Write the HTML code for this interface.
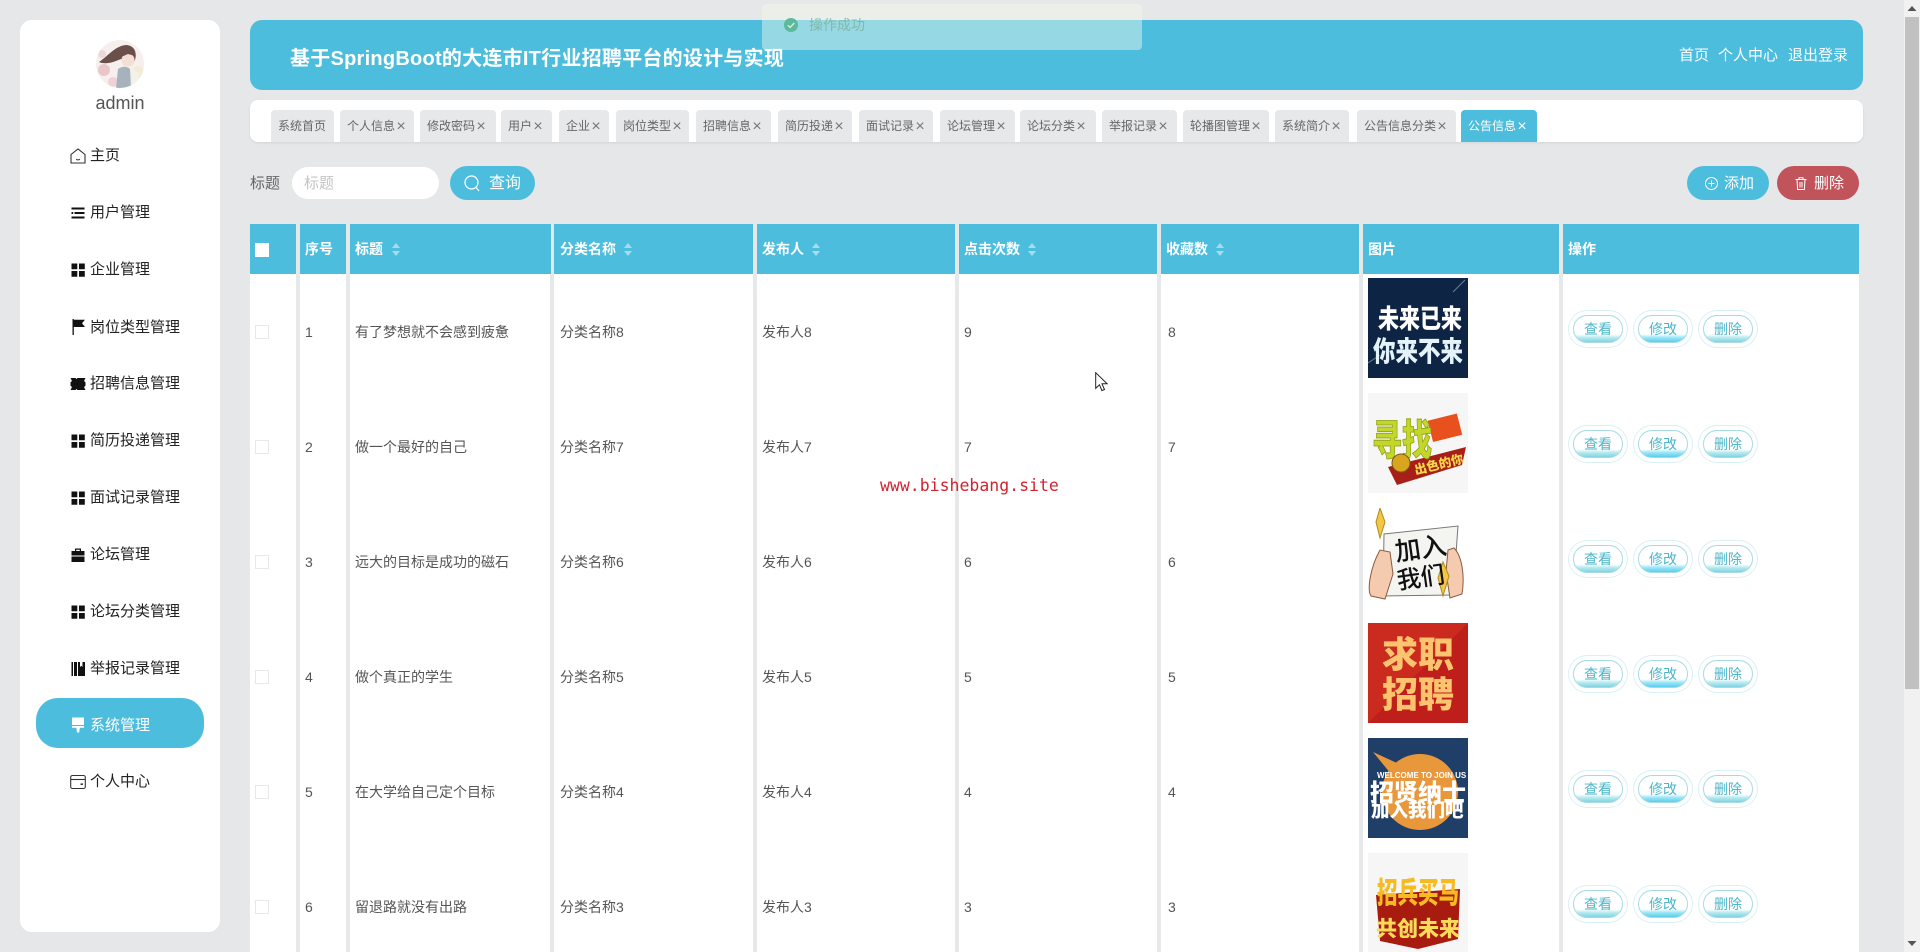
<!DOCTYPE html>
<html lang="zh-CN">
<head>
<meta charset="utf-8">
<title>基于SpringBoot的大连市IT行业招聘平台的设计与实现</title>
<style>
*{box-sizing:border-box;margin:0;padding:0}
html,body{width:1920px;height:952px;overflow:hidden}
body{position:relative;background:#e5e7e8;font-family:"Liberation Sans","Noto Sans CJK SC",sans-serif;color:#555}
.a{position:absolute}
.side{left:20px;top:20px;width:200px;height:912px;background:#fff;border-radius:12px}
.admin{left:20px;width:200px;top:91px;text-align:center;font-size:18px;line-height:24px;color:#555}
.m{left:90px;font-size:15px;line-height:24px;color:#222;white-space:nowrap;margin-top:1px}
.ic{left:70px;width:16px;height:16px;margin-top:1px}
.pill{left:36px;top:698px;width:168px;height:50px;border-radius:22px;background:#4dbddd}
.banner{left:250px;top:20px;width:1613px;height:70px;background:#4dbddd;border-radius:12px}
.title{left:290px;top:43px;font-size:20px;line-height:32px;font-weight:700;color:#fff;white-space:nowrap;letter-spacing:.25px}
.nav{top:44px;font-size:15px;line-height:24px;color:#fff;white-space:nowrap}
.tabs{left:250px;top:100px;width:1613px;height:42px;background:#fff;border-radius:8px;box-shadow:0 1px 2px rgba(0,0,0,.08)}
.t{top:110px;height:32px;background:#e6e8ea;border-radius:4px 4px 0 0;font-size:12px;line-height:33px;color:#666;padding-left:7px;white-space:nowrap}
.t b{display:inline-block;width:12px;text-align:center;font-weight:400;color:#777;font-size:16px;line-height:0;vertical-align:-1px}
.on{background:#4dbddd;color:#fff}.on b{color:#fff}
.lab{left:250px;top:172px;font-size:15px;line-height:24px;color:#666}
.inp{left:292px;top:167px;width:147px;height:32px;border-radius:16px;background:#fff;padding-left:12px;font-size:15px;line-height:33px;color:#c4c4c4}
.bt{top:166px;height:34px;border-radius:17px;color:#fff;font-size:15px;line-height:36px;white-space:nowrap}
.bt span{position:absolute;top:0}
.th{top:224px;height:50px;background:#4dbddd}
.tt{top:237px;font-size:14px;line-height:24px;font-weight:700;color:#fff;white-space:nowrap}
.so{top:243px;width:8px;height:13px}
.body{left:250px;top:274px;width:1609px;height:678px;background:#fff}
.v{top:274px;width:4px;height:678px;background:#e7e8ea}
.r{left:0;width:1920px;height:115px;font-size:14px;color:#555}
.r span{position:absolute;top:0;line-height:116px;white-space:nowrap}
.r i{position:absolute;left:255px;top:51px;width:14px;height:14px;border:1px solid #e8e8e8;background:#fff}
.r .b{position:absolute;top:41px;width:50px;height:28px;line-height:26px;text-align:center;border:1px solid #a6dbe4;border-radius:14px;font-size:14px;color:#4cb6ca;background:linear-gradient(#fff 0,#fff 70%,#b4e8ee 84%,#7fd4e2 100%);box-shadow:0 0 0 4px #fff,0 0 0 5px #d8f1f6}
.r .b2{background:linear-gradient(#fff 0,#fff 70%,#9fe8f6 82%,#58cdee 100%)}
.r svg{position:absolute;left:1368px;top:4px;width:100px;height:100px}
.toast{left:762px;top:4px;width:380px;height:46px;background:rgba(240,249,235,.45);border-radius:4px}
.tx{left:809px;top:15px;font-size:14px;line-height:20px;color:#80b9aa}
.wm{left:880px;top:475px;font-family:"DejaVu Sans Mono","Liberation Mono",monospace;font-size:16.5px;line-height:22px;color:#d3232e;white-space:nowrap}
text{font-family:"Liberation Sans","Noto Sans CJK SC",sans-serif;font-weight:900}
</style>
</head>
<body>
<div class="a side"></div>
<svg class="a" style="left:96px;top:40px" width="48" height="48" viewBox="0 0 48 48"><defs><clipPath id="cp"><circle cx="24" cy="24" r="24"/></clipPath></defs><g clip-path="url(#cp)"><rect width="48" height="48" fill="#f5efee"/><circle cx="8" cy="30" r="6" fill="#eac6ca"/><circle cx="17" cy="42" r="5" fill="#f0d2d6"/><circle cx="6" cy="14" r="4" fill="#eed6da"/><circle cx="42" cy="32" r="6" fill="#f3ead8"/><path d="M3 22C12 16 20 5 31 5c8 1 10 8 8 15l-3 5-11-6C18 22 10 25 3 22z" fill="#6b4f4a"/><circle cx="32" cy="20" r="6.500" fill="#f3dfd4"/><path d="M26 8c5-2 12 1 13 8l-7-2-7 3z" fill="#6b4f4a"/><path d="M20 48l2-19c4-3 9-3 12 0l3 19z" fill="#a7b3bc"/><path d="M34 27l9 6-2 15h-6z" fill="#f4f1e8"/></g></svg>
<div class="a admin">admin</div>

<div class="a pill"></div>
<svg class="a ic" style="top:147px" viewBox="0 0 16 16" fill="none" stroke="#333" stroke-width="1.1"><path d="M1 6.5 8 .9l7 5.6V15H1zM6.2 11.2c1 .9 2.6.9 3.6 0"/></svg>
<div class="a m" style="top:143px">主页</div>
<svg class="a ic" style="top:204px" viewBox="0 0 16 16" fill="#111"><path d="M1.5 2.5h13v2h-13zM1.5 7h1.7v2H1.500zM4.500 7h10v2h-10zM1.500 11.500h13v2h-13z"/></svg>
<div class="a m" style="top:200px">用户管理</div>
<svg class="a ic" style="top:261px" viewBox="0 0 16 16" fill="#111"><path d="M1.500 1.500h5.800v5.800H1.500zM9 1.500h5.800v5.800H9zM1.500 9h5.800v5.800H1.500zM9 9h5.800v5.800H9z"/></svg>
<div class="a m" style="top:257px">企业管理</div>
<svg class="a ic" style="top:318px" viewBox="0 0 16 16" fill="#111"><path d="M2.500 0h1.300v16H2.500zM3.800 .8H15l-3 3.500 3 3.700H3.800z"/></svg>
<div class="a m" style="top:315px">岗位类型管理</div>
<svg class="a ic" style="top:375px" viewBox="0 0 16 16" fill="#111"><path d="M.5 2h5.200l.8 1.300L7.300 2h8.200l-1.500 3 1.500 1.200v3.600L14 11l1.500 3H7.300l-.8-1.300-.8 1.300H.5L2 11 .5 9.800V6.200L2 5z"/></svg>
<div class="a m" style="top:371px">招聘信息管理</div>
<svg class="a ic" style="top:432px" viewBox="0 0 16 16" fill="#111"><path d="M1.500 1.500h5.800v5.800H1.500zM9 1.500h5.800v5.800H9zM1.500 9h5.800v5.800H1.500zM9 9h5.800v5.800H9z"/></svg>
<div class="a m" style="top:428px">简历投递管理</div>
<svg class="a ic" style="top:489px" viewBox="0 0 16 16" fill="#111"><path d="M1.500 1.500h5.800v5.800H1.500zM9 1.500h5.800v5.800H9zM1.500 9h5.800v5.800H1.500zM9 9h5.800v5.800H9z"/></svg>
<div class="a m" style="top:485px">面试记录管理</div>
<svg class="a ic" style="top:546px" viewBox="0 0 16 16" fill="#111"><path d="M5 4V1.500h6V4h-1.200V2.700H6.200V4zM1.500 4h13v4.500h-13zM1.500 9.500h13V15h-13z"/></svg>
<div class="a m" style="top:542px">论坛管理</div>
<svg class="a ic" style="top:603px" viewBox="0 0 16 16" fill="#111"><path d="M1.500 1.500h5.800v5.800H1.500zM9 1.500h5.800v5.800H9zM1.500 9h5.800v5.800H1.500zM9 9h5.800v5.800H9z"/></svg>
<div class="a m" style="top:599px">论坛分类管理</div>
<svg class="a ic" style="top:660px" viewBox="0 0 16 16" fill="#111"><path d="M1.500 1h1.500v14H1.500zM4 1h3v14H4zM8 1h2v5l1.300-1.200L12.500 6V1H15v14H8z"/></svg>
<div class="a m" style="top:656px">举报记录管理</div>
<svg class="a ic" style="top:716px" viewBox="0 0 16 16" fill="#fff"><path d="M2 .5h12V8H2zM2 9h12v1.800H9.800L9.200 15.500H7l-.6-4.700H2z"/></svg>
<div class="a m" style="top:713px;color:#fff">系统管理</div>
<svg class="a ic" style="top:773px" viewBox="0 0 16 16" fill="none" stroke="#333" stroke-width="1.100"><rect x=".7" y="1.500" width="14.600" height="13" rx="1.800"/><path d="M.7 5.500h14.600"/><path d="M10.500 10.200h2.500" stroke-width="1.500"/></svg>
<div class="a m" style="top:769px">个人中心</div>

<div class="a banner"></div>
<div class="a title">基于SpringBoot的大连市IT行业招聘平台的设计与实现</div>
<div class="a nav" style="left:1679px">首页</div>
<div class="a nav" style="left:1718px">个人中心</div>
<div class="a nav" style="left:1788px">退出登录</div>

<div class="a tabs"></div>
<div class="a t" style="left:271px;width:63px">系统首页</div>
<div class="a t" style="left:340px;width:74px">个人信息<b>×</b></div>
<div class="a t" style="left:420px;width:76px">修改密码<b>×</b></div>
<div class="a t" style="left:501px;width:51px">用户<b>×</b></div>
<div class="a t" style="left:559px;width:50px">企业<b>×</b></div>
<div class="a t" style="left:616px;width:73px">岗位类型<b>×</b></div>
<div class="a t" style="left:696px;width:75px">招聘信息<b>×</b></div>
<div class="a t" style="left:778px;width:74px">简历投递<b>×</b></div>
<div class="a t" style="left:859px;width:74px">面试记录<b>×</b></div>
<div class="a t" style="left:940px;width:75px">论坛管理<b>×</b></div>
<div class="a t" style="left:1020px;width:76px">论坛分类<b>×</b></div>
<div class="a t" style="left:1102px;width:75px">举报记录<b>×</b></div>
<div class="a t" style="left:1183px;width:86px">轮播图管理<b>×</b></div>
<div class="a t" style="left:1275px;width:74px">系统简介<b>×</b></div>
<div class="a t" style="left:1357px;width:99px">公告信息分类<b>×</b></div>
<div class="a t on" style="left:1461px;width:76px">公告信息<b>×</b></div>

<div class="a lab">标题</div>
<div class="a inp">标题</div>
<div class="a bt" style="left:450px;width:85px;background:#4dbddd;font-size:16px"><svg class="a" style="left:14px;top:9px" width="16" height="17" viewBox="0 0 16 17" fill="none" stroke="#fff" stroke-width="1.200"><circle cx="7.500" cy="7.500" r="6.500"/><path d="M12 12.500l3 3.500"/></svg><span style="left:39px">查询</span></div>
<div class="a bt" style="left:1687px;width:82px;background:#4dbddd"><svg class="a" style="left:18px;top:11px" width="13" height="13" viewBox="0 0 13 13" fill="none" stroke="#fff" stroke-width="1"><circle cx="6.500" cy="6.500" r="6"/><path d="M6.500 3.500v6M3.500 6.500h6"/></svg><span style="left:37px">添加</span></div>
<div class="a bt" style="left:1777px;width:82px;background:#c1535b"><svg class="a" style="left:18px;top:11px" width="12" height="13" viewBox="0 0 12 13" fill="none" stroke="#fff" stroke-width="1"><path d="M.5 2.500h11M4 2.500V.8h4v1.700M2 2.500l.6 10h6.800l.6-10M5 5v5.500M7 5v5.500"/></svg><span style="left:37px">删除</span></div>

<div class="a th" style="left:250px;width:46px"></div>
<div class="a th" style="left:300px;width:46px"></div>
<div class="a th" style="left:350px;width:201px"></div>
<div class="a th" style="left:554px;width:199px"></div>
<div class="a th" style="left:757px;width:198px"></div>
<div class="a th" style="left:959px;width:198px"></div>
<div class="a th" style="left:1161px;width:198px"></div>
<div class="a th" style="left:1363px;width:196px"></div>
<div class="a th" style="left:1563px;width:296px"></div>
<div class="a" style="left:255px;top:243px;width:14px;height:14px;background:#fff"></div>
<div class="a tt" style="left:305px">序号</div>
<div class="a tt" style="left:355px">标题</div>
<svg class="a so" style="left:392px" viewBox="0 0 8 13" fill="#a6dcec"><path d="M4 0l4 5H0zM4 13L0 8h8z"/></svg>
<div class="a tt" style="left:560px">分类名称</div>
<svg class="a so" style="left:624px" viewBox="0 0 8 13" fill="#a6dcec"><path d="M4 0l4 5H0zM4 13L0 8h8z"/></svg>
<div class="a tt" style="left:762px">发布人</div>
<svg class="a so" style="left:812px" viewBox="0 0 8 13" fill="#a6dcec"><path d="M4 0l4 5H0zM4 13L0 8h8z"/></svg>
<div class="a tt" style="left:964px">点击次数</div>
<svg class="a so" style="left:1028px" viewBox="0 0 8 13" fill="#a6dcec"><path d="M4 0l4 5H0zM4 13L0 8h8z"/></svg>
<div class="a tt" style="left:1166px">收藏数</div>
<svg class="a so" style="left:1216px" viewBox="0 0 8 13" fill="#a6dcec"><path d="M4 0l4 5H0zM4 13L0 8h8z"/></svg>
<div class="a tt" style="left:1368px">图片</div>
<div class="a tt" style="left:1568px">操作</div>

<div class="a body"></div>
<div class="a v" style="left:296px"></div>
<div class="a v" style="left:346px"></div>
<div class="a v" style="left:550px"></div>
<div class="a v" style="left:753px"></div>
<div class="a v" style="left:955px"></div>
<div class="a v" style="left:1157px"></div>
<div class="a v" style="left:1359px"></div>
<div class="a v" style="left:1559px"></div>

<div class="a r" style="top:274px"><i></i><span style="left:305px">1</span><span style="left:355px">有了梦想就不会感到疲惫</span><span style="left:560px">分类名称8</span><span style="left:762px">发布人8</span><span style="left:964px">9</span><span style="left:1168px">8</span>
<svg viewBox="0 0 100 100"><rect width="100" height="100" fill="#0d2444"/><path d="M85 14l12-12M0 85l12-8" stroke="#6c7f96"/><text transform="translate(10 50) scale(1 1.250)" font-size="21" fill="#fff">未来已来</text><text transform="translate(5 83) scale(1 1.250)" font-size="22.500" fill="#e4f3fa">你来不来</text></svg>
<div class="b" style="left:1573px">查看</div><div class="b b2" style="left:1638px">修改</div><div class="b" style="left:1703px">删除</div></div>

<div class="a r" style="top:389px"><i></i><span style="left:305px">2</span><span style="left:355px">做一个最好的自己</span><span style="left:560px">分类名称7</span><span style="left:762px">发布人7</span><span style="left:964px">7</span><span style="left:1168px">7</span>
<svg viewBox="0 0 100 100"><rect width="100" height="100" fill="#f6f6f6"/><path d="M20 74l78-20-4 18-65 20z" fill="#a81f17"/><rect x="62" y="24" width="30" height="22" fill="#e8501e" transform="rotate(-14 76 35)"/><text transform="translate(4 62) scale(1 1.400)" font-size="30" fill="#c3d62a" stroke="#8a9a12" stroke-width=".6">寻找</text><text x="46" y="76" font-size="12.500" fill="#f7d84c" transform="rotate(-14 70 72)">出色的你</text><circle cx="33" cy="70" r="9" fill="#d9a51e" stroke="#7a5a10"/></svg>
<div class="b" style="left:1573px">查看</div><div class="b b2" style="left:1638px">修改</div><div class="b" style="left:1703px">删除</div></div>

<div class="a r" style="top:504px"><i></i><span style="left:305px">3</span><span style="left:355px">远大的目标是成功的磁石</span><span style="left:560px">分类名称6</span><span style="left:762px">发布人6</span><span style="left:964px">6</span><span style="left:1168px">6</span>
<svg viewBox="0 0 100 100"><rect width="100" height="100" fill="#fff"/><path d="M16 26L90 18 85 87 15 88z" fill="#f4f4f0" stroke="#777"/><path d="M12 42C2 60-1 82 3 88l14 3 8-25-3-22zM80 42l-2 22 4 26 12-4c3-18 0-38-8-46z" fill="#f5cbb0" stroke="#8a5a40"/><path d="M12 0l5 14-5 16-4-16zM75 54l6 14-6 20-5-18z" fill="#f2c744" stroke="#b08a20"/><text transform="rotate(-8 50 50)" x="28" y="50" font-size="26" fill="#111" style="font-weight:500">加入</text><text transform="rotate(-8 50 50)" x="26" y="78" font-size="24" fill="#111" style="font-weight:500">我们</text></svg>
<div class="b" style="left:1573px">查看</div><div class="b b2" style="left:1638px">修改</div><div class="b" style="left:1703px">删除</div></div>

<div class="a r" style="top:619px"><i></i><span style="left:305px">4</span><span style="left:355px">做个真正的学生</span><span style="left:560px">分类名称5</span><span style="left:762px">发布人5</span><span style="left:964px">5</span><span style="left:1168px">5</span>
<svg viewBox="0 0 100 100"><rect width="100" height="100" fill="#bf1f1a"/><path d="M0 0h100L40 60 0 100z" fill="#cb2a1e"/><text x="14" y="44" font-size="36" fill="#fcc46e">求职</text><text x="14" y="84" font-size="36" fill="#fcc46e">招聘</text></svg>
<div class="b" style="left:1573px">查看</div><div class="b b2" style="left:1638px">修改</div><div class="b" style="left:1703px">删除</div></div>

<div class="a r" style="top:734px"><i></i><span style="left:305px">5</span><span style="left:355px">在大学给自己定个目标</span><span style="left:560px">分类名称4</span><span style="left:762px">发布人4</span><span style="left:964px">4</span><span style="left:1168px">4</span>
<svg viewBox="0 0 100 100"><rect width="100" height="100" fill="#1f3f68"/><circle cx="52" cy="54" r="38" fill="#e8973a"/><path d="M5 14l26 12-8 10z" fill="#e8973a"/><text x="9" y="40" font-size="8" fill="#fff" style="font-family:'Liberation Sans';font-weight:700">WELCOME TO JOIN US</text><text x="2" y="63" font-size="24" fill="#fff">招贤纳士</text><text x="3" y="79" font-size="18.500" fill="#fff">加入我们吧</text></svg>
<div class="b" style="left:1573px">查看</div><div class="b b2" style="left:1638px">修改</div><div class="b" style="left:1703px">删除</div></div>

<div class="a r" style="top:849px"><i></i><span style="left:305px">6</span><span style="left:355px">留退路就没有出路</span><span style="left:560px">分类名称3</span><span style="left:762px">发布人3</span><span style="left:964px">3</span><span style="left:1168px">3</span>
<svg viewBox="0 0 100 100"><rect width="100" height="100" fill="#f6f6f6"/><path d="M8 42l84-6-2 50-40 10-38-8z" fill="#a81c10"/><text transform="translate(9 50) scale(1 1.450)" font-size="20.500" fill="#f7bb22">招兵买马</text><text x="8" y="83" font-size="21" fill="#fbdc5a">共创未来</text></svg>
<div class="b" style="left:1573px">查看</div><div class="b b2" style="left:1638px">修改</div><div class="b" style="left:1703px">删除</div></div>

<div class="a toast"></div>
<svg class="a" style="left:784px;top:18px" width="14" height="14" viewBox="0 0 14 14"><circle cx="7" cy="7" r="7" fill="#5db99b"/><path d="M3.800 7.200l2.300 2.300 4.200-4.500" fill="none" stroke="#d7f0ea" stroke-width="1.300"/></svg>
<div class="a tx">操作成功</div>

<div class="a wm">www.bishebang.site</div>
<svg class="a" style="left:1095px;top:372px" width="13" height="20" viewBox="0 0 13 20"><path d="M.7.7v15.600l3.800-3.500 2.400 5.800 2.600-1.100-2.500-5.700h5.200z" fill="#fff" stroke="#222"/></svg>

<div class="a" style="left:1904px;top:0;width:16px;height:952px;background:#f1f1f1"></div>
<div class="a" style="left:1905px;top:17px;width:14px;height:672px;background:#c1c1c1"></div>
<svg class="a" style="left:1904px;top:0" width="16" height="952" viewBox="0 0 16 952" fill="#555"><path d="M8 6l4.500 5h-9zM8 946l-4.500-5h9z"/></svg>
</body>
</html>
